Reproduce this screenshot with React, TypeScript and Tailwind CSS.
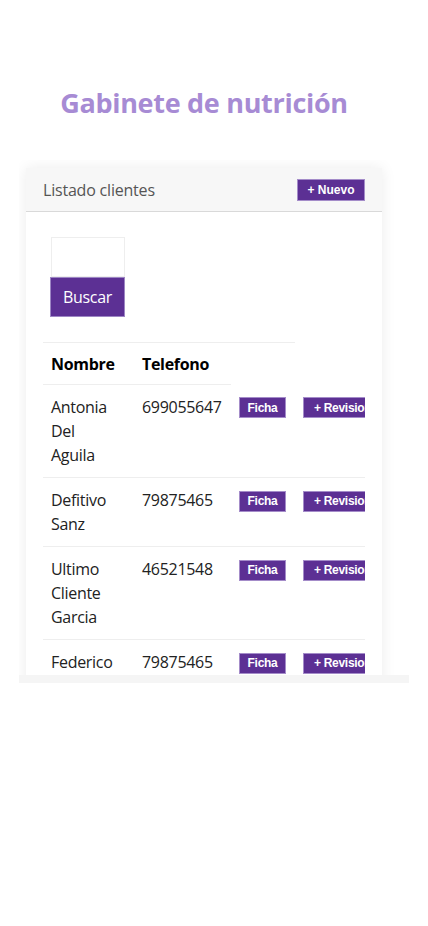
import React from "react";

const rows = [
  { name: ["Antonia", "Del", "Aguila"], tel: "699055647" },
  { name: ["Defitivo", "Sanz"], tel: "79875465" },
  { name: ["Ultimo", "Cliente", "Garcia"], tel: "46521548" },
  { name: ["Federico"], tel: "79875465" },
];

const btnFont = { fontFamily: '"Liberation Sans", Arial, sans-serif' };

export default function App() {
  return (
    <div className="w-[428px] h-[926px] bg-white" style={{ fontFamily: '"Open Sans", sans-serif' }}>
      <div className="w-[408px]">
        <h1 className="pt-[85px] text-center text-[27px] leading-[36px] font-bold text-[#a78bd4] tracking-[-0.3px]">
          Gabinete de nutrición
        </h1>
        <div className="mt-[39px] ml-[19px] w-[390px]">
          <div className="h-[515px] overflow-hidden pl-[7px] pt-[8px]">
            <div className="w-[356px] bg-white shadow-[0_0_14px_rgba(0,0,0,0.08)]">
              <div className="h-[44px] bg-[#f7f7f7] border-b border-[#d9d9d9] flex items-center justify-between pl-[17px] pr-[17px]">
                <span className="text-[16px] text-[#555] tracking-[-0.2px]">Listado clientes</span>
                <button
                  className="h-[22px] w-[68px] bg-[#5c3094] border border-[#a48cc9] text-white text-[12px] font-bold"
                  style={btnFont}
                >
                  + Nuevo
                </button>
              </div>
              <div className="pt-[25px] pl-[17px] pr-[17px] pb-[40px]">
                <div className="pl-[7px]">
                  <div className="ml-[1px] w-[74px] h-[40px] border border-[#eeeeee] bg-white" />
                  <button className="w-[75px] h-[40px] bg-[#5c3094] border border-[#9d86c4] text-white text-[16px] tracking-[-0.3px]">
                    Buscar
                  </button>
                </div>
                <div className="mt-[25px] overflow-hidden">
                  <table className="table-fixed w-[400px] border-collapse text-[16px] text-[#222] tracking-[-0.3px]">
                    <colgroup>
                      <col className="w-[91px]" />
                      <col className="w-[97px]" />
                      <col className="w-[64px]" />
                      <col className="w-[148px]" />
                    </colgroup>
                    <thead>
                      <tr className="h-[42px]">
                        <th className="border-t border-b border-[#eeeeee] pl-[8px] pr-[8px] text-left font-bold text-black">Nombre</th>
                        <th className="border-t border-b border-[#eeeeee] pl-[8px] pr-[8px] text-left font-bold text-black">Telefono</th>
                        <th className="border-t border-[#eeeeee]"></th>
                        <th></th>
                      </tr>
                    </thead>
                    <tbody>
                      {rows.map((r, i) => (
                        <tr key={i} className="border-b border-[#eeeeee] align-top">
                          <td className="pl-[8px] pr-[8px] pt-[10px] pb-[10px] leading-[24px]">
                            {r.name.map((n, j) => (
                              <div key={j}>{n}</div>
                            ))}
                          </td>
                          <td className="pl-[8px] pr-[8px] pt-[10px] leading-[24px]">{r.tel}</td>
                          <td className="pl-[8px] pr-[8px] pt-[9px]">
                            <button
                              className="h-[21px] w-[47px] bg-[#5c3094] border border-[#a48cc9] text-white text-[12px] font-bold"
                              style={btnFont}
                            >
                              Ficha
                            </button>
                          </td>
                          <td className="pl-[8px] pr-[8px] pt-[9px]">
                            <button
                              className="h-[21px] w-[86px] bg-[#5c3094] border border-[#a48cc9] text-white text-[12px] font-bold text-left pl-[10px] whitespace-nowrap"
                              style={btnFont}
                            >
                              + Revision
                            </button>
                          </td>
                        </tr>
                      ))}
                    </tbody>
                  </table>
                </div>
              </div>
            </div>
          </div>
          <div className="h-[8px] bg-[#f5f5f5]" />
        </div>
      </div>
    </div>
  );
}
